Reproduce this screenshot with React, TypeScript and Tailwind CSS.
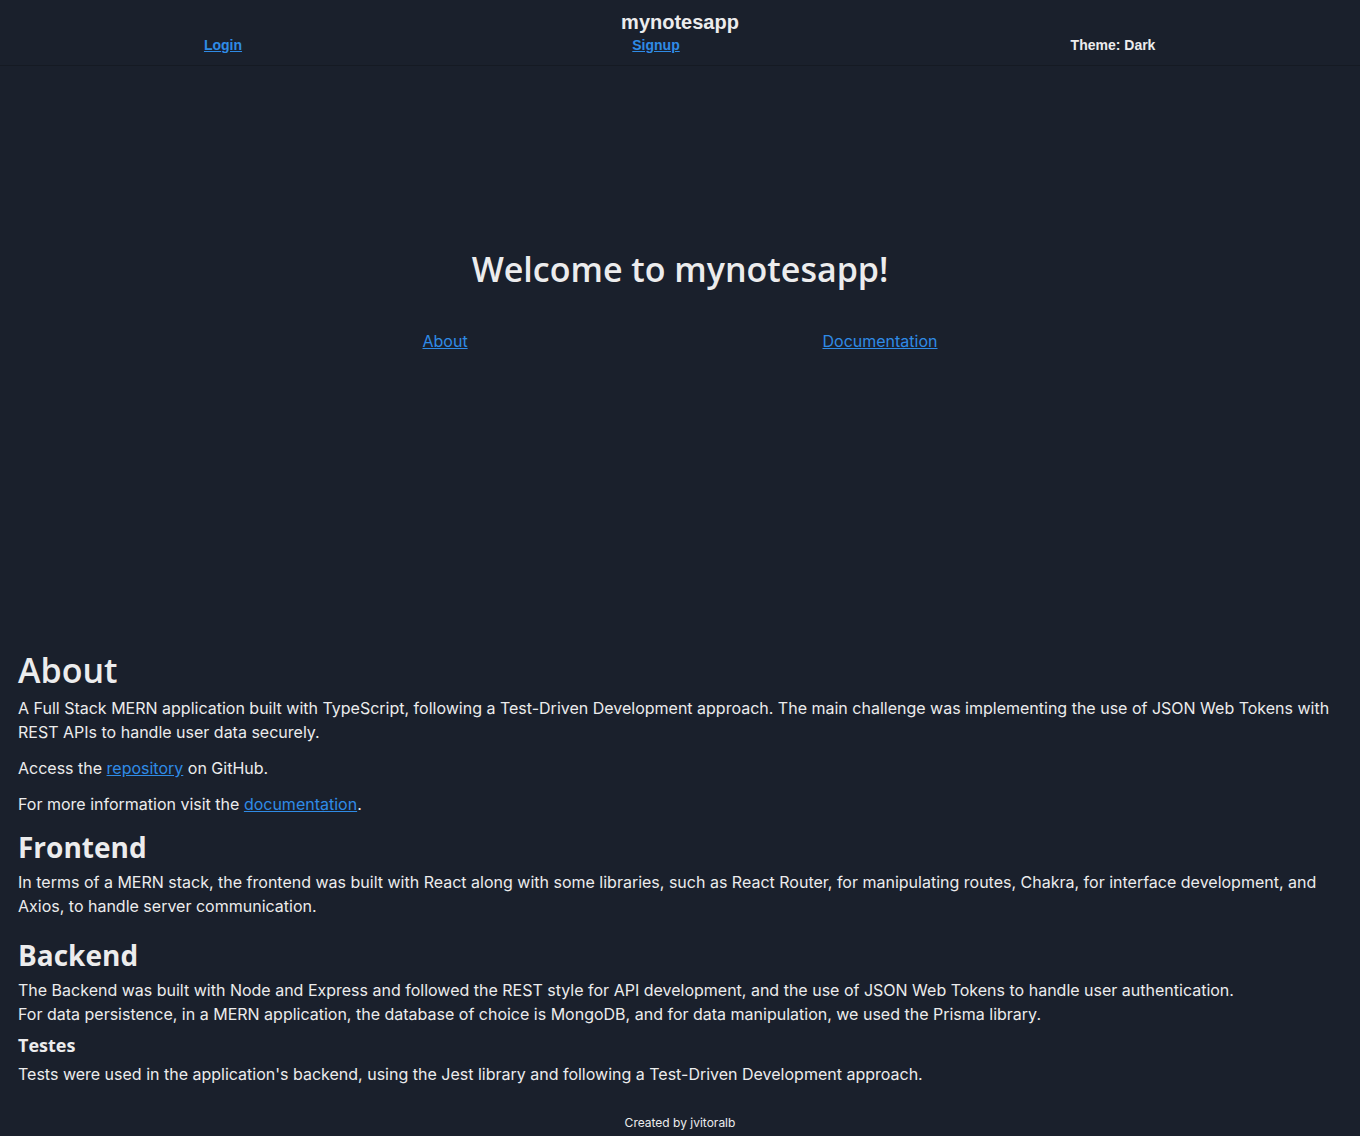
import React from 'react';

const heading = { fontFamily: '"Open Sans", "Noto Sans", sans-serif' };

export default function App() {
  return (
    <div className="min-h-screen bg-[#1a202c] text-[#ececed] font-['Inter',sans-serif]">
      {/* Header */}
      <header className="h-[66px] border-b border-[#151a23] pt-[9px]">
        <h1 className="text-center text-[20px] leading-[26px] font-bold font-['Liberation_Sans',Arial,sans-serif]">
          mynotesapp
        </h1>
        <nav className="grid grid-cols-[446px_420px_1fr] text-[14px] leading-[20px] font-bold font-['Liberation_Sans',Arial,sans-serif]">
          <div className="text-center">
            <a href="#" className="text-[#2f8be6] underline">Login</a>
          </div>
          <div className="text-center">
            <a href="#" className="text-[#2f8be6] underline">Signup</a>
          </div>
          <div className="text-center">
            <button className="font-bold">Theme: Dark</button>
          </div>
        </nav>
      </header>

      {/* Hero */}
      <section className="h-[578px] flex flex-col items-center pt-[178px]">
        <h2 style={heading} className="text-[34px] leading-[50px] font-semibold">
          Welcome to mynotesapp!
        </h2>
        <div className="w-[515px] flex justify-between mt-[35px] text-[16px] leading-[24px]">
          <a href="#" className="text-[#2f8be6] underline">About</a>
          <a href="#" className="text-[#2f8be6] underline">Documentation</a>
        </div>
      </section>

      {/* About */}
      <main className="px-[18px] text-[16px] leading-[24px]">
        <h2 style={heading} className="text-[34px] leading-[52px] font-semibold">About</h2>
        <p>
          A Full Stack MERN application built with TypeScript, following a Test-Driven Development approach. The main challenge was implementing the use of JSON Web Tokens with REST APIs to handle user data securely.
        </p>
        <p className="mt-3">
          Access the <a href="#" className="text-[#2f8be6] underline">repository</a> on GitHub.
        </p>
        <p className="mt-3">
          For more information visit the <a href="#" className="text-[#2f8be6] underline">documentation</a>.
        </p>

        <h3 style={heading} className="mt-[8px] text-[28px] leading-[46px] font-bold">Frontend</h3>
        <p>
          In terms of a MERN stack, the frontend was built with React along with some libraries, such as React Router, for manipulating routes, Chakra, for interface development, and Axios, to handle server communication.
        </p>

        <h3 style={heading} className="mt-[14px] text-[28px] leading-[46px] font-bold">Backend</h3>
        <p>
          The Backend was built with Node and Express and followed the REST style for API development, and the use of JSON Web Tokens to handle user authentication.
          <br />
          For data persistence, in a MERN application, the database of choice is MongoDB, and for data manipulation, we used the Prisma library.
        </p>
        <h4 style={heading} className="mt-[2px] text-[18px] leading-[34px] font-bold">Testes</h4>
        <p>
          Tests were used in the application's backend, using the Jest library and following a Test-Driven Development approach.
        </p>
      </main>

      <footer className="pt-[28px] pb-[4px] text-center text-[12px] leading-[18px]">
        Created by jvitoralb
      </footer>
    </div>
  );
}
